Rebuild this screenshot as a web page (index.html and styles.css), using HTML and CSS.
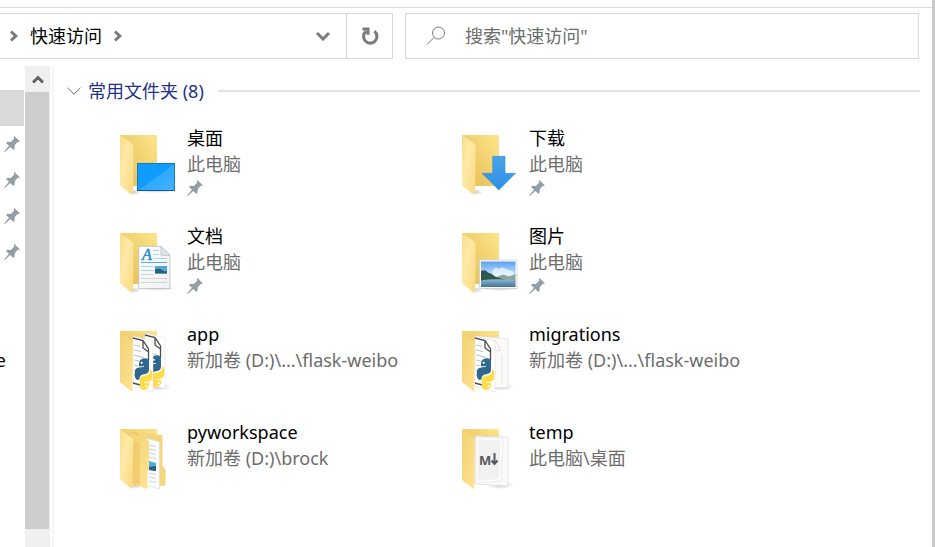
FILE: index.html
```
<!DOCTYPE html>
<html lang="zh-CN">
<head>
<meta charset="utf-8">
<title>快速访问</title>
<link rel="stylesheet" href="styles.css">
</head>
<body>
<svg class="defs" aria-hidden="true">
  <defs>
    <linearGradient id="back" x1="0" y1="1" x2="1" y2="0"><stop offset="0" stop-color="#e2b954"/><stop offset=".45" stop-color="#efce6b"/><stop offset="1" stop-color="#fde48b"/></linearGradient>
    <linearGradient id="flap" x1="0" y1="0" x2="1" y2="1"><stop offset="0" stop-color="#f8dc86"/><stop offset=".4" stop-color="#ffe9a8"/><stop offset="1" stop-color="#f9d97d"/></linearGradient>
    <linearGradient id="flap2" x1="0" y1="0" x2="1" y2="1"><stop offset="0" stop-color="#f3d070"/><stop offset="1" stop-color="#ffe394"/></linearGradient>
    <linearGradient id="screen" x1="0" y1="0" x2="1" y2="1"><stop offset="0" stop-color="#109cff"/><stop offset=".5" stop-color="#109cff"/><stop offset=".51" stop-color="#2ea8ff"/><stop offset="1" stop-color="#45b2ff"/></linearGradient>
    <linearGradient id="arrow" x1="0" y1="0" x2="0" y2="1"><stop offset="0" stop-color="#4aa3ea"/><stop offset="1" stop-color="#2c90e6"/></linearGradient>
    <linearGradient id="sky" x1="0" y1="0" x2="0" y2="1"><stop offset="0" stop-color="#5b9ff0"/><stop offset=".6" stop-color="#d5ebfb"/></linearGradient>
    <linearGradient id="sea" x1="0" y1="0" x2="0" y2="1"><stop offset="0" stop-color="#8fb9cf"/><stop offset="1" stop-color="#3f7397"/></linearGradient>
    <linearGradient id="paper" x1="0" y1="0" x2="1" y2="1"><stop offset="0" stop-color="#fff"/><stop offset="1" stop-color="#eef0f1"/></linearGradient>
    <radialGradient id="shade"><stop offset="0" stop-color="#000" stop-opacity=".2"/><stop offset="1" stop-color="#000" stop-opacity="0"/></radialGradient>
    <symbol id="pin" viewBox="0 0 16 16"><path fill="#929da5" d="M10.4 0 16 5.4 14.6 6 13.8 5.7 10.7 9.2 10.6 12.6 9.5 14 6.2 10.9.8 16 0 15.4 5 9.7 2 6.9 3.4 5.8 6.9 6 10.3 2.6 9.8 1.3z"/></symbol>
    <symbol id="folder" viewBox="0 0 64 70">
      <ellipse cx="18" cy="62" rx="7" ry="3" fill="url(#shade)"/>
      <path fill="url(#back)" d="M4 5H41V56H14L4 50z"/>
      <path fill="url(#flap)" d="M4 5 16 13.5Q17.4 14.5 17.4 16V54L16.3 65.3 4 55.6z"/>
    </symbol>
    <symbol id="snake" viewBox="0 0 18 32">
      <path fill="#30678f" d="M4.500 6Q4.500 .8 10 .3 14.500 0 14.500 4.500V11.500Q14.500 15.500 10.500 16L7.500 16.800Q5 17.700 5 21.500L2.500 22Q0 20 0 15.500 .2 10.500 3.500 9.800L9.500 8.800V8L4.500 8.500z"/>
      <path fill="#ffdd49" d="M15.500 11Q18 12 18 17.500 18 22.500 14.500 23.500L9.500 24.500V25.300L14.800 24.800V27Q14.800 31.200 9.500 31.700 5.300 31.800 5.300 27.500V22Q5.300 18.500 9 17.800L12.500 17Q15.500 16 15.500 13z"/>
      <circle cx="7.200" cy="4.800" r="1.100" fill="#fff"/><circle cx="12.200" cy="28.200" r="1.100" fill="#fff"/>
    </symbol>
    <symbol id="script" viewBox="0 0 22 58">
      <path fill="#fff" stroke="#d8dadb" stroke-width=".5" d="M1 1 21 6V57L1 51z"/>
      <path fill="none" stroke="#4b4d4f" stroke-width="1.300" d="M1 3 11 5.500 16.500 14V26M11 5.500V13L16.500 17M1 48 10 50.500"/>
      <path fill="none" stroke="#bfc2c4" stroke-width="1.200" d="M2 10 8 11.500M2 15 9 16.500M2 20 12 22.500M2 25 9 26.500M2 30 6 31M2 35 5 36M2 40 6 41"/>
      <use href="#snake" x="2.500" y="23" width="18" height="32"/>
    </symbol>
  </defs>
</svg>

<div class="window">
  <header class="toolbar">
    <div class="address">
      <nav class="crumbs" aria-label="路径">
        <svg class="sep" viewBox="0 0 8 12" aria-hidden="true"><path d="M1 1.500 5.800 6 1 10.500"/></svg>
        <a href="#quick">快速访问</a>
        <svg class="sep" viewBox="0 0 8 12" aria-hidden="true"><path d="M1 1.500 5.800 6 1 10.500"/></svg>
      </nav>
      <button class="history" type="button" aria-label="历史记录"><svg viewBox="0 0 14 10" aria-hidden="true"><path d="M1 2 7 8 13 2"/></svg></button>
      <button class="refresh" type="button" aria-label="刷新"><svg viewBox="0 0 18 18" aria-hidden="true"><path d="M5.200 4.200A6.700 6.700 0 1 0 13.300 4.200" /><path d="M1.500 2H7V7.800"/></svg></button>
    </div>
    <label class="search">
      <svg viewBox="0 0 20 20" aria-hidden="true"><circle cx="12.500" cy="7" r="6"/><path d="M8.200 11.300 1 18.500"/></svg>
      <input type="search" placeholder="搜索&quot;快速访问&quot;" aria-label="搜索">
    </label>
  </header>

  <div class="body">
    <aside class="side">
      <ul>
        <li class="selected"></li>
        <li><svg class="pin" aria-hidden="true"><use href="#pin"/></svg></li>
        <li><svg class="pin" aria-hidden="true"><use href="#pin"/></svg></li>
        <li><svg class="pin" aria-hidden="true"><use href="#pin"/></svg></li>
        <li><svg class="pin" aria-hidden="true"><use href="#pin"/></svg></li>
        <li></li>
        <li></li>
        <li class="label">e</li>
      </ul>
    </aside>
    <div class="scroll">
      <button type="button" aria-label="向上滚动"><svg viewBox="0 0 12 10" aria-hidden="true"><path d="M1 8.500 6 3.500 11 8.500"/></svg></button>
      <div class="track"><div class="thumb"></div></div>
    </div>

    <main id="quick">
      <h1><svg viewBox="0 0 14 8" aria-hidden="true"><path d="M.5.800 7 7.200 13.500.800"/></svg>常用文件夹 (8)</h1>
      <ul class="grid">
        <li>
          <svg class="icon" viewBox="0 0 64 70" aria-hidden="true"><use href="#folder"/>
            <ellipse cx="40" cy="61" rx="20" ry="2" fill="url(#shade)"/>
            <rect x="21.500" y="33.500" width="37" height="27" fill="url(#screen)" stroke="#1479bd"/><path d="M21 60.500H59" stroke="#0b5c99"/></svg>
          <div><h2>桌面</h2><p>此电脑</p><svg class="pin" aria-hidden="true"><use href="#pin"/></svg></div>
        </li>
        <li>
          <svg class="icon" viewBox="0 0 64 70" aria-hidden="true"><use href="#folder"/>
            <path fill="url(#arrow)" stroke="#2b84cf" stroke-width=".5" d="M34.700 26.300H47V43.300H57.500L40.800 60 24 43.300H34.700z"/></svg>
          <div><h2>下载</h2><p>此电脑</p><svg class="pin" aria-hidden="true"><use href="#pin"/></svg></div>
        </li>
        <li>
          <svg class="icon" viewBox="0 0 64 70" aria-hidden="true"><use href="#folder"/>
            <ellipse cx="42" cy="60" rx="19" ry="3" fill="url(#shade)"/>
            <path fill="url(#paper)" stroke="#b4b8ba" stroke-width=".7" d="M22.700 18.300H45L54 27.300V60.500H22.700z"/>
            <path fill="#e2e5e7" stroke="#b4b8ba" stroke-width=".7" d="M45 18.300V27.300H54z"/>
            <path stroke="#a9d6ee" d="M37 22.500H43M37 26.500H43M37 30.500H51M25 38.500H38M25 42.500H38"/>
            <path stroke="#55aee0" d="M25 34.500H51"/>
            <path stroke="#cfd4d7" d="M25 46.500H38M25 50.500H51M25 54.500H51"/>
            <path fill="#51a8e3" d="M39 38H51V45.500H39z"/><path fill="#2c6170" d="M39 41Q44 40 46 42T51 43V45.500H39z"/>
            <text class="letter" x="26" y="32">A</text></svg>
          <div><h2>文档</h2><p>此电脑</p><svg class="pin" aria-hidden="true"><use href="#pin"/></svg></div>
        </li>
        <li>
          <svg class="icon" viewBox="0 0 64 70" aria-hidden="true"><use href="#folder"/>
            <ellipse cx="42" cy="60.500" rx="20" ry="2.500" fill="url(#shade)"/>
            <path fill="#fff" stroke="#c6cacd" stroke-width=".7" d="M21.500 32H59V60.500H21.500z"/>
            <path fill="url(#sky)" d="M23 33.500H57.500V59H23z"/>
            <path fill="#eaf5fd" d="M35 42Q38 38 41 41 44 38 48 41L56 44V48H34z" opacity=".8"/>
            <path fill="#8da69b" d="M36 50 45 46.500 51 48.500 57.500 46V53H36z"/>
            <path fill="#2d584c" d="M23 43Q27 41 30 44.500 34 45.500 37 48.500L46 51.500V53.500H23z"/>
            <path fill="url(#sea)" d="M23 52.500Q35 50.500 57.500 52V59H23z"/></svg>
          <div><h2>图片</h2><p>此电脑</p><svg class="pin" aria-hidden="true"><use href="#pin"/></svg></div>
        </li>
        <li>
          <svg class="icon" viewBox="0 0 64 70" aria-hidden="true">
            <ellipse cx="42" cy="61" rx="14" ry="4" fill="url(#shade)"/>
            <path fill="url(#back)" d="M4 5H41V30H16z"/>
            <use href="#script" x="28" y="6" width="22" height="58"/>
            <use href="#script" x="16" y="9" width="22" height="58"/>
            <path fill="url(#flap2)" d="M4 5 16 15Q17 16 17 18L16.300 66 4 56z"/></svg>
          <div><h2>app</h2><p>新加卷 (D:)\...\flask-weibo</p></div>
        </li>
        <li>
          <svg class="icon" viewBox="0 0 64 70" aria-hidden="true">
            <ellipse cx="42" cy="61" rx="14" ry="4" fill="url(#shade)"/>
            <path fill="url(#back)" d="M4 5H41V30H16z"/>
            <path fill="#fafafa" stroke="#d6d8d9" stroke-width=".6" d="M18 10 50 12.500V61.500L36 62z"/>
            <path fill="none" stroke="#e2ddca" stroke-width=".8" d="M36 13 42 22V25L37 24M44 28V58"/>
            <use href="#script" x="16" y="9" width="22" height="58"/>
            <path fill="url(#flap2)" d="M4 5 16 15Q17 16 17 18L16.300 66 4 56z"/></svg>
          <div><h2>migrations</h2><p>新加卷 (D:)\...\flask-weibo</p></div>
        </li>
        <li>
          <svg class="icon" viewBox="0 0 64 70" aria-hidden="true">
            <ellipse cx="19" cy="62" rx="7" ry="3" fill="url(#shade)"/>
            <path fill="url(#back)" d="M4 5H41V30H16z"/>
            <path fill="#f5d67d" d="M20 8 46.500 11V42L49.500 45V61.500L43 62 30 20z"/>
            <path fill="#fafbfb" stroke="#d6d8d9" stroke-width=".6" d="M30 14 43.500 18V65L31 62z"/>
            <path stroke="#bcc7ce" d="M33 21 40 22.500M33 25 40 26.500M33 29 40 30.500M33 33 40 34.500M33 49 40 50.500M33 53 40 54.500M33 57 40 58.500" stroke-width=".8"/>
            <path fill="#50addf" d="M33 37 40 39V47L33 46z"/><path fill="#2a6175" d="M33 43 40 42V47L33 46z"/>
            <path fill="#e9c461" d="M12 8 22 9V62L16 60z"/>
            <path fill="url(#flap2)" d="M11 7 32 15.500Q33 16.500 33 18V45L31.500 47V65L16 60V17z"/>
            <path fill="#e9c25e" d="M17 17 24 20V61L16 60z" opacity=".55"/>
            <path fill="url(#flap)" d="M4 5 16 14Q17.400 15 17.400 17L16.300 65.300 4 55.600z"/></svg>
          <div><h2>pyworkspace</h2><p>新加卷 (D:)\brock</p></div>
        </li>
        <li>
          <svg class="icon" viewBox="0 0 64 70" aria-hidden="true">
            <ellipse cx="42" cy="61" rx="14" ry="4" fill="url(#shade)"/>
            <path fill="url(#back)" d="M4 5H41V30H16z"/>
            <path fill="#fafafa" stroke="#d6d8d9" stroke-width=".6" d="M17 12 50 13V62L17 60z"/>
            <path fill="#fff" stroke="#dcdedf" stroke-width=".6" d="M18 13 45 14.500 43 57 18 59z"/>
            <path fill="#f1f1f1" d="M20 15 43 16.500 41 55 20 57z"/>
            <text class="mark" x="21" y="41">M</text>
            <path fill="none" stroke="#58595a" stroke-width="2" d="M36.500 29V40M33.500 36.500 36.500 40 39.500 36.500"/>
            <path fill="url(#flap2)" d="M4 5 15.500 13.500Q17 14.500 17 17L16.300 65.500 4 56z"/></svg>
          <div><h2>temp</h2><p>此电脑\桌面</p></div>
        </li>
      </ul>
    </main>
  </div>
</div>
</body>
</html>
```
FILE: styles.css
```
* { box-sizing: border-box; }

body {
  margin: 0;
  background: #fff;
  color: #000;
  font: 18px/26px "Noto Sans", "Noto Sans CJK SC", sans-serif;
}

.defs { position: absolute; width: 0; height: 0; }

svg { display: block; flex: none; }
h1, h2, p, ul { margin: 0; padding: 0; font-size: 18px; font-weight: 400; }
ul { list-style: none; }
button { padding: 0; border: 0; background: none; display: grid; place-items: center; }

.window {
  display: flex;
  flex-direction: column;
  min-height: 100vh;
  border-right: 3px solid #cbcbcb;
}

.toolbar {
  display: flex;
  gap: 12px;
  margin-top: 7px;
  padding: 5px 13px 7px 0;
  border-top: 1px solid #d9d9d9;
}

.address {
  display: flex;
  flex: 3 1 0;
  height: 46px;
  border: 1px solid #d9d9d9;
  border-left: 0;
}
.crumbs { display: flex; flex: 1; align-items: center; gap: 12px; padding-left: 10px; }
.crumbs a { color: #000; text-decoration: none; }
.sep { width: 8px; height: 12px; }
.sep path, .history path, .refresh path { fill: none; stroke: #7a7a7a; stroke-width: 3; }
.history { width: 46px; }
.history svg { width: 14px; height: 10px; }
.refresh { width: 46px; border-left: 1px solid #d9d9d9; }
.refresh svg { width: 18px; height: 18px; }

.search {
  display: flex;
  flex: 4 1 0;
  align-items: center;
  gap: 19px;
  height: 46px;
  padding-left: 20px;
  border: 1px solid #d9d9d9;
}
.address { flex: 0 0 43%; max-width: 393px; }
.search svg { width: 20px; height: 20px; fill: none; stroke: #7b7b7b; }
.search input {
  flex: 1;
  min-width: 0;
  padding: 0;
  border: 0;
  outline: 0;
  background: none;
  font: inherit;
}
.search input::placeholder { color: #6d6d6d; opacity: 1; }

.body { display: flex; flex: 1; }

.side { width: 25px; padding-top: 24px; }
.side li { height: 36px; width: 24px; padding: 10px 4px; }
.side .selected { background: #d9d9d9; }
.side .label { display: flex; align-items: center; justify-content: flex-end; padding: 0 18px 0 0; }
.pin { width: 16px; height: 16px; }

.scroll { display: flex; flex-direction: column; width: 25px; background: #f0f0f0; }
.scroll button { height: 26px; }
.scroll button svg { width: 12px; height: 10px; }
.scroll button path { fill: none; stroke: #606060; stroke-width: 3; }
.track { display: flex; flex: 1; flex-direction: column; padding-right: 1px; }
.thumb { flex: 0 0 96%; background: #cdcdcd; }

main {
  flex: 1;
  margin-left: 2px;
  padding: 12px 12px 0 13px;
  border-left: 2px solid #f6f6f6;
}
h1 { display: flex; align-items: center; color: #1e3287; }
h1 svg { width: 14px; height: 8px; margin-right: 7px; fill: none; stroke: #6b6b6b; }
h1::after { content: ""; flex: 1; height: 2px; margin-left: 14px; background: #e2e2e2; }

.grid {
  display: grid;
  grid-template-columns: repeat(auto-fill, 342px);
  grid-auto-rows: 98px;
  padding: 21px 0 0 49px;
}
.grid li { display: flex; gap: 7px; }
.icon { width: 64px; height: 70px; margin-top: 5px; }
.grid p { color: #6d6d6d; }
.grid .pin { margin-top: 3px; }

.letter { font: italic 16px "Liberation Serif", serif; fill: #1f8fd0; stroke: #1f8fd0; stroke-width: 0.5px; }
.mark { font: bold 13px "Open Sans", sans-serif; fill: #58595a; }
```
